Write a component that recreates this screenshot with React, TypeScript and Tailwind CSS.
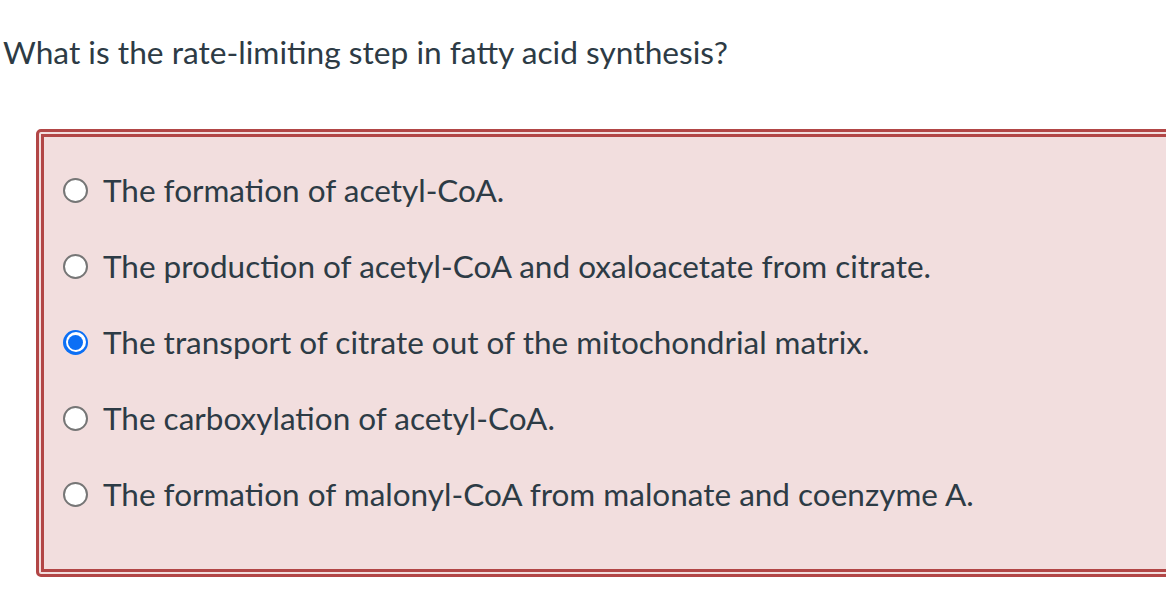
import React from "react";

const options = [
  "The formation of acetyl-CoA.",
  "The production of acetyl-CoA and oxaloacetate from citrate.",
  "The transport of citrate out of the mitochondrial matrix.",
  "The carboxylation of acetyl-CoA.",
  "The formation of malonyl-CoA from malonate and coenzyme A.",
];

function Radio({ checked }: { checked: boolean }) {
  if (checked) {
    return (
      <span className="flex h-[25px] w-[25px] shrink-0 items-center justify-center rounded-full bg-[#0b6ff5]">
        <span className="flex h-[20px] w-[20px] items-center justify-center rounded-full bg-white">
          <span className="h-[15px] w-[15px] rounded-full bg-[#0b6ff5]" />
        </span>
      </span>
    );
  }
  return <span className="h-[25px] w-[25px] shrink-0 rounded-full border-2 border-[#767676] bg-white" />;
}

export default function App() {
  return (
    <div className="h-[606px] w-[1166px] overflow-hidden bg-white font-['Lato',sans-serif] text-[#2d3b45]">
      <div className="pl-[3px] pt-[34px] text-[31.7px] leading-[36px]">
        What is the rate-limiting step in fatty acid synthesis?
      </div>
      <div className="ml-[36px] mt-[59px] w-[1160px] rounded-[5px] border-[8px] border-double border-[#b24646] bg-[#f2dede] pb-[37px] pt-[15px]">
        {options.map((o, i) => (
          <div key={i} className="flex h-[76px] items-center pl-[19px]">
            <Radio checked={i === 2} />
            <span className="ml-[15px] text-[31.5px] leading-[36px]">{o}</span>
          </div>
        ))}
      </div>
    </div>
  );
}
